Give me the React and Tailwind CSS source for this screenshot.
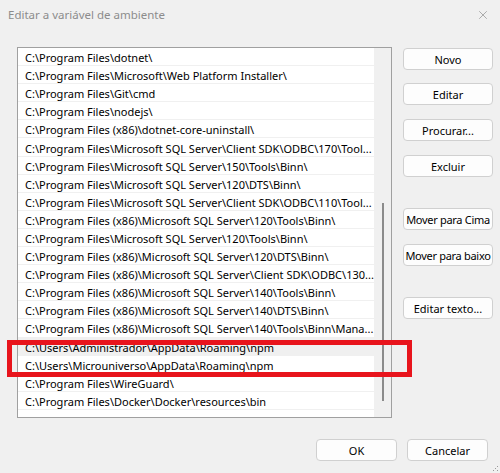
import { X } from 'lucide-react';

const paths = [
  'C:\\Program Files\\dotnet\\',
  'C:\\Program Files\\Microsoft\\Web Platform Installer\\',
  'C:\\Program Files\\Git\\cmd',
  'C:\\Program Files\\nodejs\\',
  'C:\\Program Files (x86)\\dotnet-core-uninstall\\',
  'C:\\Program Files\\Microsoft SQL Server\\Client SDK\\ODBC\\170\\Tool...',
  'C:\\Program Files\\Microsoft SQL Server\\150\\Tools\\Binn\\',
  'C:\\Program Files\\Microsoft SQL Server\\120\\DTS\\Binn\\',
  'C:\\Program Files\\Microsoft SQL Server\\Client SDK\\ODBC\\110\\Tool...',
  'C:\\Program Files (x86)\\Microsoft SQL Server\\120\\Tools\\Binn\\',
  'C:\\Program Files\\Microsoft SQL Server\\120\\Tools\\Binn\\',
  'C:\\Program Files (x86)\\Microsoft SQL Server\\120\\DTS\\Binn\\',
  'C:\\Program Files (x86)\\Microsoft SQL Server\\Client SDK\\ODBC\\130...',
  'C:\\Program Files (x86)\\Microsoft SQL Server\\140\\Tools\\Binn\\',
  'C:\\Program Files (x86)\\Microsoft SQL Server\\140\\DTS\\Binn\\',
  'C:\\Program Files (x86)\\Microsoft SQL Server\\140\\Tools\\Binn\\Mana...',
  'C:\\Users\\Administrador\\AppData\\Roaming\\npm',
  'C:\\Users\\Microuniverso\\AppData\\Roaming\\npm',
  'C:\\Program Files\\WireGuard\\',
  'C:\\Program Files\\Docker\\Docker\\resources\\bin',
];

function Btn({ children, className = '', w = 'w-[90px]' }) {
  return (
    <button
      className={`h-[22px] ${w} overflow-hidden rounded-[4px] border border-[#d0d0d0] bg-[#fdfdfd] px-0 text-[11px] text-black whitespace-nowrap leading-none ${className}`}
    >
      {children}
    </button>
  );
}

export default function App() {
  return (
    <div
      className="relative h-[473px] w-[500px] overflow-hidden bg-[#f0f0f0] text-[11px] text-black"
      style={{ fontFamily: '"Noto Sans", "Liberation Sans", sans-serif' }}
    >
      {/* title bar */}
      <div className="flex h-[30px] items-center justify-between pl-[8px] pr-[10px]">
        <span className="text-[11.5px] text-[#8c8c8c]">Editar a variável de ambiente</span>
        <X size={14} strokeWidth={1.2} className="text-[#8c8c8c]" />
      </div>

      <div className="flex pl-[17px] pt-[17px]">
        {/* list */}
        <div className="flex h-[371px] w-[375px] border border-[#a0a0a0] bg-white">
          <div className="w-[356px]">
            {paths.map((p, i) => (
              <div
                key={p}
                className={`flex h-[18.1px] items-center border-b border-[#f0f0f0] pl-[7px] pt-[2px] leading-none whitespace-nowrap overflow-hidden ${
                  i === 16 ? 'bg-[#f0f0f0]' : ''
                }`}
              >
                {p}
              </div>
            ))}
          </div>
          <div className="flex w-[17px] justify-center bg-[#f0f0f0] pt-[155px]">
            <div className="h-[198px] w-[2px] bg-[#8b8b8b]" />
          </div>
        </div>

        {/* buttons */}
        <div className="ml-[11px] flex flex-col pt-[1px]">
          <Btn>Novo</Btn>
          <Btn className="mt-[13px]">Editar</Btn>
          <Btn className="mt-[14px]">Procurar...</Btn>
          <Btn className="mt-[14px]">Excluir</Btn>
          <Btn className="mt-[31px] tracking-[-0.3px]">Mover para Cima</Btn>
          <Btn className="mt-[14px] tracking-[-0.3px]">Mover para baixo</Btn>
          <Btn className="mt-[31px]">Editar texto...</Btn>
        </div>
      </div>

      {/* bottom buttons */}
      <div className="mt-[21px] flex justify-end gap-[10px] pr-[12px]">
        <Btn w="w-[81px]">OK</Btn>
        <Btn w="w-[81px]">Cancelar</Btn>
      </div>

      {/* red highlight overlay */}
      <div className="pointer-events-none absolute left-[7px] top-[340px] h-[37px] w-[405px] border-[5px] border-[#e8141c]" />

      {/* resize grip */}
      <svg className="absolute bottom-[1px] right-[1px]" width="8" height="8" viewBox="0 0 8 8">
        <rect x="6" y="2" width="1" height="1" fill="#9a9a9a" />
        <rect x="6" y="6" width="1" height="1" fill="#9a9a9a" />
        <rect x="2" y="6" width="1" height="1" fill="#9a9a9a" />
        <rect x="4" y="4" width="1" height="1" fill="#9a9a9a" />
      </svg>
    </div>
  );
}
